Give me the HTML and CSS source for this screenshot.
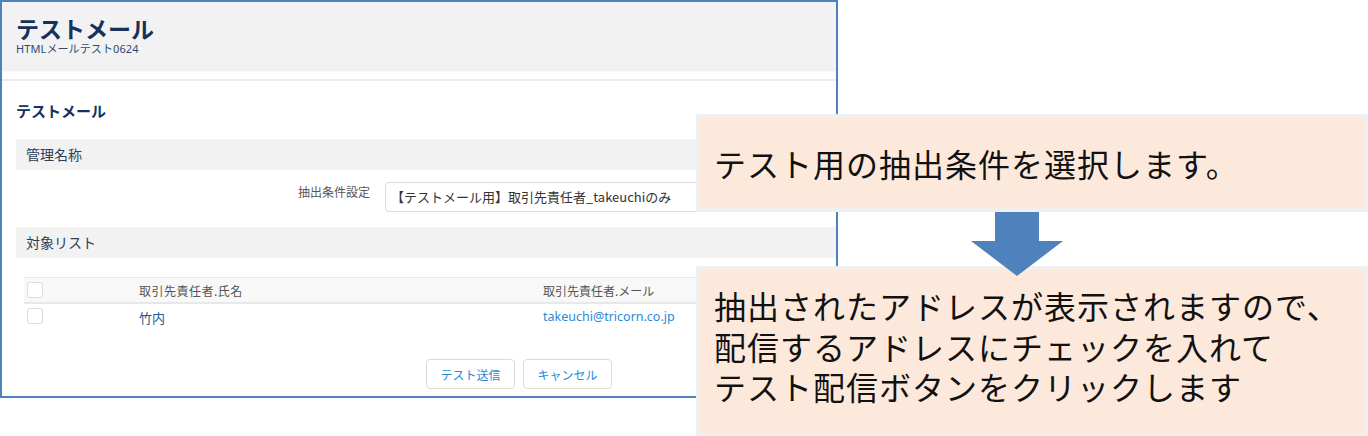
FILE: index.html
```html
<!DOCTYPE html>
<html lang="ja">
<head>
<meta charset="utf-8">
<title>テストメール</title>
<link rel="stylesheet" href="styles.css">
</head>
<body>
<div class="stage">
  <div class="frame">
    <header class="page-header">
      <h1 class="page-title">テストメール</h1>
      <div class="page-sub">HTMLメールテスト0624</div>
    </header>
    <div class="divider"></div>
    <main class="content">
      <h2 class="section-title">テストメール</h2>
      <div class="bar">管理名称</div>
      <div class="field-row">
        <label class="field-label">抽出条件設定</label>
        <div class="field-input">【テストメール用】取引先責任者_takeuchiのみ</div>
      </div>
      <div class="bar">対象リスト</div>
      <div class="table">
        <div class="row head">
          <span class="cell cb"><span class="checkbox"></span></span>
          <span class="cell name">取引先責任者.氏名</span>
          <span class="cell mail">取引先責任者.メール</span>
        </div>
        <div class="row">
          <span class="cell cb"><span class="checkbox"></span></span>
          <span class="cell name link-dark">竹内</span>
          <span class="cell mail link">takeuchi@tricorn.co.jp</span>
        </div>
      </div>
      <div class="actions">
        <button class="btn">テスト送信</button>
        <button class="btn">キャンセル</button>
      </div>
    </main>
  </div>

  <div class="callout callout-1">テスト用の抽出条件を選択します。</div>
  <svg class="arrow" width="92" height="64" viewBox="0 0 92 64" aria-hidden="true">
    <polygon points="24,0 68,0 68,29 92,29 46,64 0,29 24,29" fill="#4f81bd"/>
  </svg>
  <div class="callout callout-2">抽出されたアドレスが表示されますので、<br>配信するアドレスにチェックを入れて<br>テスト配信ボタンをクリックします</div>
</div>
</body>
</html>
```

FILE: styles.css
```css
* { box-sizing: border-box; }
html, body { margin: 0; padding: 0; background: #fff; }
body {
  font-family: "Noto Sans", "Noto Sans CJK JP", sans-serif;
  color: #16325c;
}
.stage {
  position: relative;
  width: 1368px;
  height: 436px;
  overflow: hidden;
}
.frame {
  width: 838px;
  height: 398px;
  border: 2px solid #4f81bd;
  overflow: hidden;
  background: #fff;
}
.page-header {
  background: #f2f2f2;
  height: 67px;
  padding: 13px 14px 0 14px;
  box-shadow: 0 2px 2px rgba(0, 0, 0, 0.08);
}
.page-title {
  margin: 0;
  font-family: "Noto Sans CJK JP", sans-serif;
  font-size: 23px;
  line-height: 26px;
  height: 26px;
  font-weight: 700;
  color: #16325c;
}
.page-sub {
  font-size: 11px;
  line-height: 14px;
  color: #2f4a70;
  margin-top: 1px;
  letter-spacing: 0.1px;
}
.divider {
  height: 2px;
  background: #ececec;
  margin-top: 10px;
}
.content {
  padding: 0 0 0 14px;
}
.section-title {
  margin: 0;
  padding-top: 21px;
  height: 58px;
  font-family: "Noto Sans CJK JP", sans-serif;
  font-size: 15px;
  line-height: 18px;
  font-weight: 700;
  color: #16325c;
}
.bar {
  background: #f2f2f2;
  height: 31px;
  line-height: 31px;
  padding-left: 10px;
  font-family: "Noto Sans CJK JP", sans-serif;
  font-size: 14px;
  color: #2b3e57;
}
.field-row {
  display: flex;
  align-items: flex-start;
  height: 57px;
  padding-top: 12px;
}
.field-label {
  flex: 0 0 auto;
  width: 354px;
  text-align: right;
  font-family: "Noto Sans CJK JP", sans-serif;
  font-size: 12px;
  line-height: 20px;
  color: #555;
}
.field-input {
  flex: 0 0 auto;
  margin-left: 15px;
  width: 500px;
  height: 30px;
  border: 1px solid #dddbda;
  border-radius: 4px;
  padding-left: 5px;
  font-size: 13px;
  line-height: 28px;
  color: #333;
  font-family: "Noto Sans CJK JP", sans-serif;
}
.table {
  margin-top: 19px;
  margin-left: 8px;
}
.row {
  display: flex;
  align-items: center;
  height: 27px;
}
.row.head {
  height: 27px;
  background: #f8f8f8;
  border-top: 1px solid #e8e8e8;
  border-bottom: 2px solid #e8e8e8;
  color: #555;
}
.row:not(.head) {
  align-items: flex-start;
  padding-top: 4px;
}
.cell { font-size: 12px; font-family: "Noto Sans CJK JP", sans-serif; }
.cell.cb { width: 115px; padding-left: 3px; display: flex; align-items: center; }
.cell.name { width: 404px; letter-spacing: 0.5px; color: #555; }
.cell.mail { color: #555; }
.checkbox {
  display: inline-block;
  width: 16px;
  height: 16px;
  border: 1px solid #dddbda;
  border-radius: 3px;
  background: #fff;
}
.cell.link-dark { color: #2a5590; font-size: 13px; letter-spacing: 0; }
.cell.link { color: #2a8ad8; font-family: "Noto Sans", sans-serif; font-size: 12.5px; }
.actions {
  display: flex;
  gap: 8px;
  margin-top: 28px;
  margin-left: 410px;
}
.btn {
  width: 89px;
  height: 30px;
  background: #fff;
  border: 1px solid #dddbda;
  border-radius: 4px;
  font-family: "Noto Sans CJK JP", sans-serif;
  font-size: 12px;
  color: #2a8ad8;
  padding: 0;
}

.callout {
  position: absolute;
  left: 696px;
  width: 672px;
  background: #fde9dc;
  border: 4px solid #efefef;
  font-family: "Noto Sans CJK JP", sans-serif;
  font-size: 32px;
  letter-spacing: 1px;
  color: #111;
  padding-left: 14px;
  z-index: 2;
}
.callout-1 {
  top: 114px;
  height: 98px;
  display: flex;
  align-items: center;
  line-height: 40px;
}
.callout-2 {
  top: 266px;
  height: 172px;
  line-height: 40.5px;
  padding-top: 15px;
}
.arrow {
  position: absolute;
  left: 971px;
  top: 212px;
  z-index: 3;
}
```
